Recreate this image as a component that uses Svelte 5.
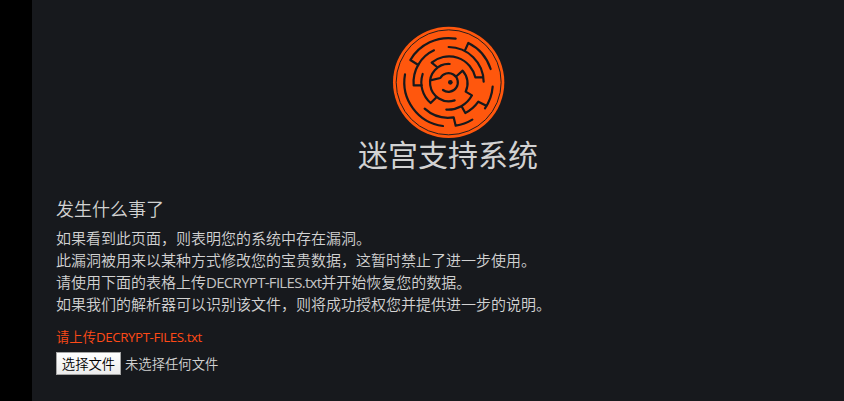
<script>
  const lines = [
    ['如果看到此页面，则表明您的系统中存在漏洞。'],
    ['此漏洞被用来以某种方式修改您的宝贵数据，这暂时禁止了进一步使用。'],
    ['请使用下面的表格上传', 'DECRYPT-FILES.txt', '并开始恢复您的数据。'],
    ['如果我们的解析器可以识别该文件，则将成功授权您并提供进一步的说明。'],
  ];
</script>

<div class="page">
  <main>
    <header>
      <svg viewBox="0 0 360 360" width="120" height="120" aria-hidden="true">
        <circle cx="182" cy="181" r="167" fill="#ff570d" />
        <g fill="none" stroke="#17191d">
          <circle cx="182" cy="181" r="157.5" stroke-width="2.8" />
          <g stroke-width="6.6" stroke-linecap="round" stroke-linejoin="round">
            <path d="M203 50A133 133 0 0 0 67 114L91 129" />
            <path d="M138 85A106 106 0 0 0 77 190H101" />
            <path d="M104 156A82 82 0 0 0 128 243L144 227" />
            <path d="M147 135L131 122A81 81 0 0 1 262 166H285" />
            <path d="M182 75A106 106 0 0 1 287 179" />
            <path d="M231 85L241 63A133 133 0 0 1 308 141" />
            <path d="M51 157A133 133 0 0 0 165 312" />
            <path d="M110 260A106 106 0 0 0 197 286L203 311A133 133 0 0 0 253 293" />
            <path d="M175 263A82 82 0 0 0 252 220L233 209A57 57 0 0 0 224 146L206 162" />
            <path d="M222 255L232 273A106 106 0 0 0 271 239L295 251" />
            <path d="M314 194A133 133 0 0 1 291 259" />
            <path d="M185 126A56 56 0 1 0 200 235" />
            <path d="M127 175L157 168A28 28 0 1 1 165 204" />
          </g>
        </g>
        <circle cx="187" cy="181" r="7" fill="#17191d" />
      </svg>
      <h1>迷宫支持系统</h1>
    </header>
    <h2>发生什么事了</h2>
    <div class="copy">
      {#each lines as line}
        <p>{line[0]}{#if line[1]}<span class="file">{line[1]}</span>{line[2]}{/if}</p>
      {/each}
    </div>
    <div class="prompt">请上传<span>DECRYPT-FILES.txt</span></div>
    <div class="upload">
      <button type="button">选择文件</button>
      <span>未选择任何文件</span>
    </div>
  </main>
</div>

<style>
  :global(body) {
    background: #000;
  }
  .page {
    box-sizing: border-box;
    height: 401px;
    padding-left: 32px;
    overflow: hidden;
    background: #000;
    color: #d2d2d2;
    font-family: "Open Sans", "Noto Sans CJK SC", sans-serif;
    font-weight: 350;
  }
  main {
    box-sizing: border-box;
    height: 401px;
    padding: 22px 4px 0 24px;
    background: #17191d;
  }
  header {
    display: flex;
    flex-direction: column;
    align-items: center;
    height: 174px;
  }
  svg {
    flex: none;
  }
  h1, h2, p {
    margin: 0;
    font-weight: 350;
    white-space: nowrap;
  }
  h1 {
    font-size: 30px;
    font-weight: 400;
    line-height: 36px;
    margin-top: -5px;
  }
  h2 {
    font-size: 18px;
    line-height: 26px;
  }
  .copy {
    margin-top: 5px;
  }
  p {
    font-size: 15px;
    line-height: 22px;
    height: 22px;
  }
  .file {
    font-weight: 400;
    color: #c4c4c4;
    letter-spacing: -0.7px;
  }
  .prompt {
    margin-top: 12px;
    height: 20px;
    line-height: 20px;
    font-size: 13.33px;
    color: #ff4a17;
  }
  .prompt span {
    font-weight: 400;
    letter-spacing: -0.42px;
  }
  .upload {
    display: flex;
    align-items: center;
    gap: 4px;
    margin-top: 5px;
    font-size: 13.33px;
    line-height: 20px;
  }
  button {
    box-sizing: border-box;
    width: 65px;
    height: 23px;
    padding: 0;
    border: 1px solid #a5a5a5;
    border-radius: 0;
    background: linear-gradient(#fff, #ececec);
    color: #000;
    font: inherit;
    white-space: nowrap;
  }
</style>
